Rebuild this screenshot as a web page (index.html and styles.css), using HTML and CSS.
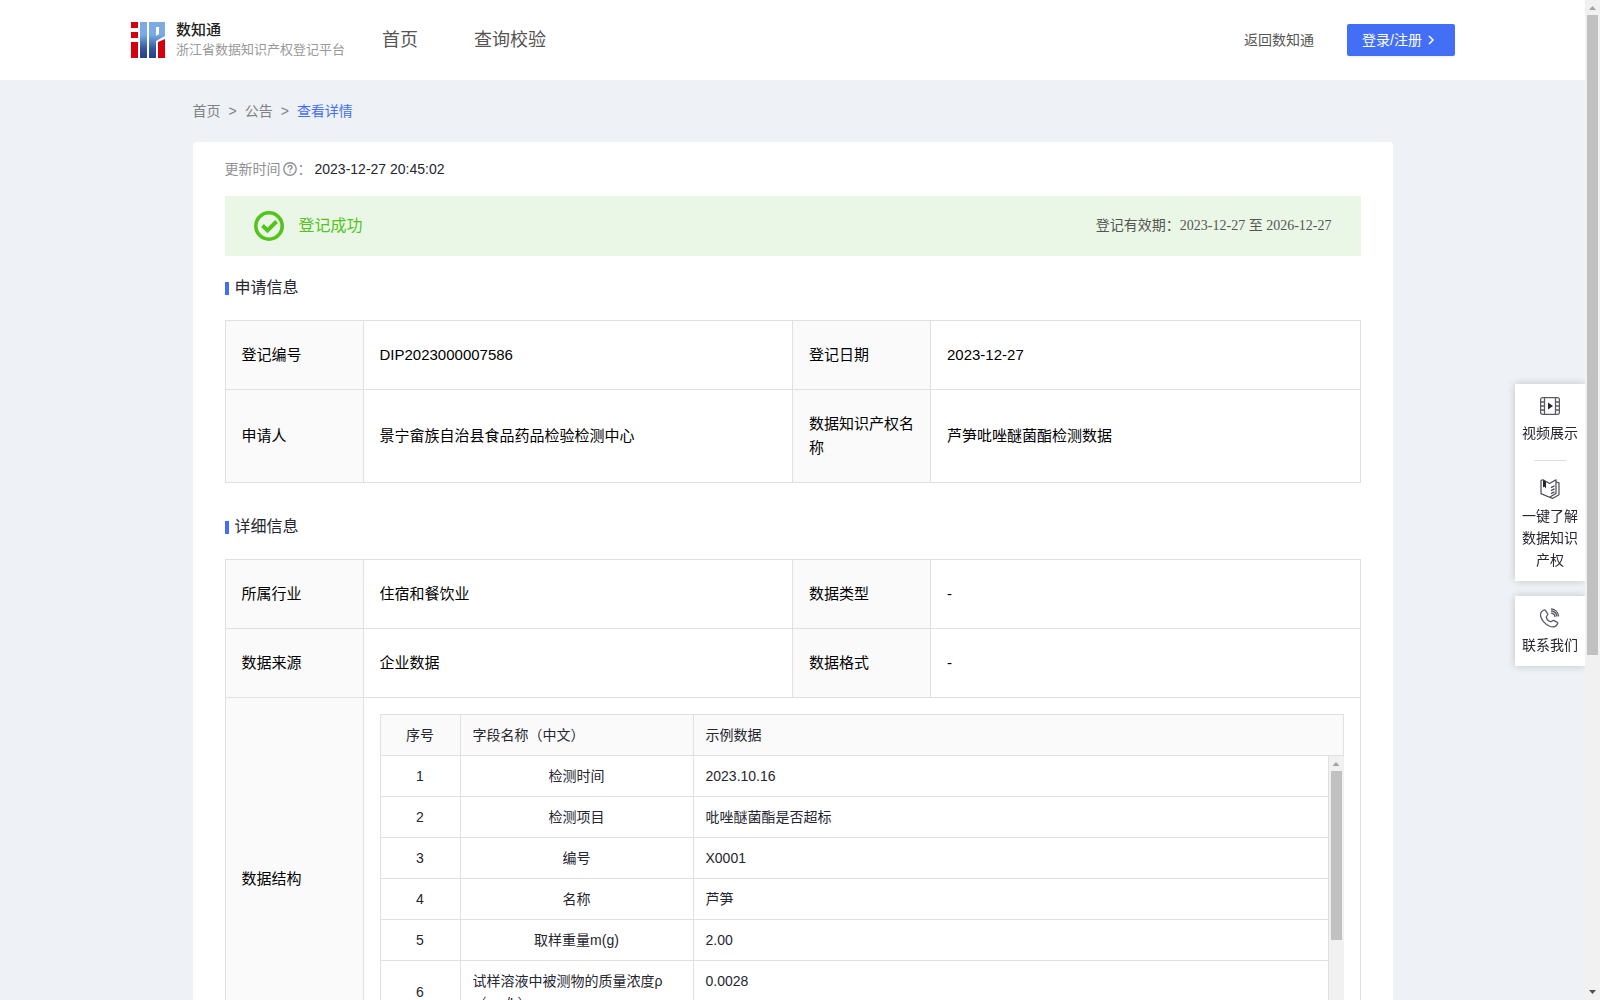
FILE: index.html
```html
<!DOCTYPE html>
<html lang="zh-CN">
<head>
<meta charset="utf-8">
<meta name="viewport" content="width=device-width, initial-scale=1">
<title>数知通 - 查看详情</title>
<link rel="stylesheet" href="styles.css">
</head>
<body>
<div class="page">
  <header class="header">
    <a class="brand" href="#">
      <svg class="brand-logo" viewBox="0 0 34 36" aria-hidden="true">
        <defs>
          <linearGradient id="blue" x1="0" y1="0" x2="0" y2="36" gradientUnits="userSpaceOnUse">
            <stop offset="0" stop-color="#7fa9e0"/>
            <stop offset=".35" stop-color="#77abe8"/>
            <stop offset=".75" stop-color="#33559b"/>
            <stop offset="1" stop-color="#27408b"/>
          </linearGradient>
        </defs>
        <path fill="#d4000f" d="M0 0h7v6H0zM0 10h7v6H0zM0 20h7v16H0zM27 20l7-3v19h-7z"/>
        <path fill="url(#blue)" d="M9 0h7v36H9zM18 0h16v14l-9 5v17h-7z"/>
        <path fill="#fff" d="M25 5h3v7l-3 2z"/>
      </svg>
      <span class="brand-text">
        <strong class="brand-name">数知通</strong>
        <span class="brand-sub">浙江省数据知识产权登记平台</span>
      </span>
    </a>
    <nav class="nav">
      <a href="#">首页</a>
      <a href="#">查询校验</a>
    </nav>
    <div class="actions">
      <a class="back" href="#">返回数知通</a>
      <button class="login" type="button">登录/注册
        <svg width="8" height="10" viewBox="0 0 8 10" aria-hidden="true"><path d="M1 1l4 4-4 4" fill="none" stroke="#fff" stroke-width="1.5"/></svg>
      </button>
    </div>
  </header>

  <main class="main">
    <nav class="crumbs"><a href="#">首页</a><span>&gt;</span><a href="#">公告</a><span>&gt;</span><a class="current" href="#">查看详情</a></nav>
    <div class="card">
      <div class="updated">
        <span class="updated-label">更新时间</span>
        <svg width="14" height="14" viewBox="0 0 14 14" aria-hidden="true"><circle cx="7" cy="7" r="6.200" fill="none" stroke="#8f9095" stroke-width="1.400"/><path d="M5 5.600c0-2.800 4-2.600 4-.2C9 6.800 7 6.800 7 8.400M7 9.400v1.300" fill="none" stroke="#8f9095" stroke-width="1.400"/></svg>
        <span class="updated-label">：</span>
        <time>2023-12-27 20:45:02</time>
      </div>

      <div class="banner">
        <svg width="30" height="30" viewBox="0 0 30 30" aria-hidden="true"><circle cx="15" cy="15" r="13.200" fill="none" stroke="#52c41a" stroke-width="3.600"/><path d="M8.500 14.500l5 5 9-9" fill="none" stroke="#52c41a" stroke-width="4"/></svg>
        <span class="banner-title">登记成功</span>
        <span class="banner-date">登记有效期：2023-12-27 至 2026-12-27</span>
      </div>

      <h2 class="section-title">申请信息</h2>
      <table class="info">
        <colgroup><col class="col-label"><col><col class="col-label"><col></colgroup>
        <tr><th scope="row">登记编号</th><td>DIP2023000007586</td><th scope="row">登记日期</th><td>2023-12-27</td></tr>
        <tr><th scope="row">申请人</th><td>景宁畲族自治县食品药品检验检测中心</td><th scope="row">数据知识产权名称</th><td>芦笋吡唑醚菌酯检测数据</td></tr>
      </table>

      <h2 class="section-title">详细信息</h2>
      <table class="info">
        <colgroup><col class="col-label"><col><col class="col-label"><col></colgroup>
        <tr><th scope="row">所属行业</th><td>住宿和餐饮业</td><th scope="row">数据类型</th><td>-</td></tr>
        <tr><th scope="row">数据来源</th><td>企业数据</td><th scope="row">数据格式</th><td>-</td></tr>
        <tr>
          <th scope="row">数据结构</th>
          <td class="nested" colspan="3">
            <table class="fields fields-head">
              <colgroup><col class="col-index"><col class="col-name"><col></colgroup>
              <thead><tr><th scope="col">序号</th><th scope="col">字段名称（中文）</th><th scope="col">示例数据</th></tr></thead>
            </table>
            <div class="fields-scroll">
              <table class="fields fields-body">
                <colgroup><col class="col-index"><col class="col-name"><col></colgroup>
                <tbody>
                  <tr><td>1</td><td>检测时间</td><td>2023.10.16</td></tr>
                  <tr><td>2</td><td>检测项目</td><td>吡唑醚菌酯是否超标</td></tr>
                  <tr><td>3</td><td>编号</td><td>X0001</td></tr>
                  <tr><td>4</td><td>名称</td><td>芦笋</td></tr>
                  <tr><td>5</td><td>取样重量m(g)</td><td>2.00</td></tr>
                  <tr class="tall"><td>6</td><td>试样溶液中被测物的质量浓度ρ（mg/L）</td><td>0.0028</td></tr>
                </tbody>
              </table>
              <div class="scrollbar" aria-hidden="true"><i class="arrow-up"></i><i class="thumb thumb-table"></i></div>
            </div>
          </td>
        </tr>
      </table>
    </div>
  </main>
</div>

<div class="scrollbar" aria-hidden="true"><i class="arrow-up"></i><i class="thumb thumb-page"></i><i class="arrow-down"></i></div>

<aside class="dock">
  <div class="dock-group">
    <a class="dock-item" href="#">
      <svg width="20" height="20" viewBox="0 0 20 20" aria-hidden="true"><g fill="none" stroke="#5a5b62" stroke-width="1.300"><rect x=".6" y="1.600" width="18.800" height="16.800" rx="2"/><path d="M4.500 1.600v16.800M15.500 1.600v16.800M.6 6h3.900M.6 10h3.900M.6 14h3.900M15.500 6h3.900M15.500 10h3.900M15.500 14h3.900"/></g><path d="M8 6.500l5 3.500-5 3.500z" fill="#25262f"/></svg>
      <span>视频展示</span>
    </a>
    <a class="dock-item divided" href="#">
      <svg width="20" height="20" viewBox="0 0 20 20" aria-hidden="true"><g fill="none" stroke="#4a4b52" stroke-width="1.200" stroke-linejoin="round"><path d="M1 1.400L3 .8l6.500 3.700L16 .8v13.600l-6.500 3.800L1 14.600z"/><path d="M16 3l3 .8v12L12.500 19.400l-3-1.200M11 8.600l3.500-1.700M11 11.600l3.500-1.700M11 14.600l3.500-1.700"/></g><path d="M3 1l3 1.600v7L4.500 7.800 3 8.200z" fill="#25262f"/></svg>
      <span>一键了解数据知识产权</span>
    </a>
  </div>
  <div class="dock-group">
    <a class="dock-item" href="#">
      <svg width="20" height="20" viewBox="0 0 20 20" aria-hidden="true"><g fill="none" stroke="#5a5b62" stroke-width="1.300" stroke-linecap="round" stroke-linejoin="round"><path d="M5.500 2.300L7.800 6.200c.4.800-1.600 2-1.500 2.900.3 1.800 2.300 3.900 4.400 4.600 1 .3 2-1.700 2.900-1.300l3.800 2c1 .6-.8 3.400-2.200 4-3.300 1.500-8-.6-11-4C1.300 11.100-.2 7.200.9 4.700 1.500 3.300 4.500 1 5.500 2.300z"/><path d="M11.500 5.200c1.900.3 3.200 1.500 3.600 3.300M11.500 1c3.700.3 6.600 3.200 7 6.800M11.500 3c3 .4 5 2.300 5.400 5"/></g></svg>
      <span>联系我们</span>
    </a>
  </div>
</aside>
</body>
</html>
```
FILE: styles.css
```css
* { box-sizing: border-box; }

body {
  margin: 0;
  display: flex;
  height: 100vh;
  overflow: hidden;
  background: #eef2f6;
  color: #25262f;
  font: 14px/22px "Liberation Sans", "Noto Sans CJK SC", sans-serif;
}

a { color: inherit; text-decoration: none; }
svg { display: block; flex: none; }

.page { flex: 1; min-width: 0; overflow: hidden; }

/* Header */
.header {
  display: flex;
  align-items: center;
  height: 80px;
  padding: 0 130px;
  background: #fff;
  color: #555;
}
.brand { display: flex; align-items: center; gap: 10px; }
.brand-logo { width: 36px; height: 36px; }
.brand-text { display: flex; flex-direction: column; width: 166px; white-space: nowrap; }
.brand-name { color: #222; font-size: 15px; font-weight: 500; line-height: 20px; }
.brand-sub { color: #999; font-size: 13px; line-height: 20px; }
.nav { display: flex; gap: 56px; margin-left: 40px; font-size: 18px; }
.actions { display: flex; align-items: center; gap: 33px; margin-left: auto; }
.login {
  display: flex;
  align-items: center;
  gap: 6px;
  width: 108px;
  height: 32px;
  padding: 0 15px;
  border: 0;
  border-radius: 2px;
  background: #436ff6;
  box-shadow: 0 2px 0 rgba(0, 0, 0, .04);
  color: #fff;
  font: inherit;
  white-space: nowrap;
}

/* Content */
.main { max-width: 1200px; margin: 0 auto; }
.crumbs { display: flex; gap: 8px; padding: 20px 0; color: #808185; }
.crumbs .current { color: #436ff6; }
.card { padding: 16px 32px 32px; border-radius: 4px 4px 0 0; background: #fff; }
.updated { display: flex; align-items: center; }
.updated-label { color: #8f9095; }
.updated svg { margin: 0 1px 0 2px; }
.updated time { margin-left: 3px; }

.banner {
  display: flex;
  align-items: center;
  height: 60px;
  margin-top: 16px;
  padding: 0 29px;
  background: #ebf7e6;
}
.banner-title { margin-left: 15px; color: #52c41a; font-size: 16px; }
.banner-date {
  margin-left: auto;
  color: #555;
  font-family: "Liberation Serif", "Noto Sans CJK SC", serif;
}

.section-title {
  display: flex;
  align-items: center;
  gap: 6px;
  margin: 20px 0;
  font-size: 16px;
  font-weight: 400;
  line-height: 24px;
}
.section-title::before { content: ""; width: 4px; height: 13px; background: #436ff6; }
.info + .section-title { margin-top: 32px; }

.info {
  width: 100%;
  border-collapse: collapse;
  table-layout: fixed;
  color: #000;
  font-size: 15px;
  line-height: 24px;
}
.info .col-label { width: 138px; }
.info th, .info td {
  padding: 22px 16px;
  border: 1px solid #e0e0e0;
  font-weight: 400;
  text-align: left;
}
.info th { background: #fafafa; }
.info .nested { padding: 16px; }

/* Field list inside the detail table */
.fields {
  width: 100%;
  border-collapse: separate;
  border-spacing: 0;
  border-left: 1px solid #e0e0e0;
  table-layout: fixed;
  color: #25262f;
  font-size: 14px;
  line-height: 22px;
}
.fields-head { border-top: 1px solid #e0e0e0; }
.fields .col-index { width: 80px; }
.fields .col-name { width: 233px; }
.info .fields th, .info .fields td {
  padding: 9px 12px;
  border-width: 0 1px 1px 0;
}
.info .fields th:first-child,
.info .fields-body td:first-child,
.info .fields-body td:nth-child(2) { text-align: center; }
.info .fields-body .tall td + td { vertical-align: top; text-align: left; }
.fields-scroll { display: flex; height: 288px; overflow: hidden; }
.fields-body { flex: 1; align-self: flex-start; }

/* Scroll bars */
.scrollbar {
  display: flex;
  flex: none;
  flex-direction: column;
  align-items: center;
  width: 15px;
  background: #f1f1f1;
}
.arrow-up, .arrow-down { width: 7px; height: 4px; }
.arrow-up { margin: 6px 0 5px; background: #a3a3a3; clip-path: polygon(50% 0, 100% 100%, 0 100%); }
.arrow-down { margin: auto 0 6px; background: #505050; clip-path: polygon(0 0, 100% 0, 50% 100%); }
.thumb { width: 11px; background: #c1c1c1; }
.thumb-page { height: 64%; }
.thumb-table { height: 169px; }

/* Floating shortcuts */
.dock {
  position: fixed;
  top: 384px;
  right: 15px;
  display: flex;
  flex-direction: column;
  gap: 15px;
  width: 70px;
}
.dock-group {
  padding: 0 7px;
  background: #fff;
  box-shadow: 0 0 8px rgba(0, 0, 0, .2);
  clip-path: inset(-12px 0 -12px -12px);
}
.dock-item {
  display: flex;
  flex-direction: column;
  align-items: center;
  gap: 6px;
  padding: 12px 0 10px;
  text-align: center;
}
.divided { padding-top: 6px; }
.divided::before { content: ""; width: 32px; height: 1px; margin-bottom: 12px; background: #ddd; }
```
